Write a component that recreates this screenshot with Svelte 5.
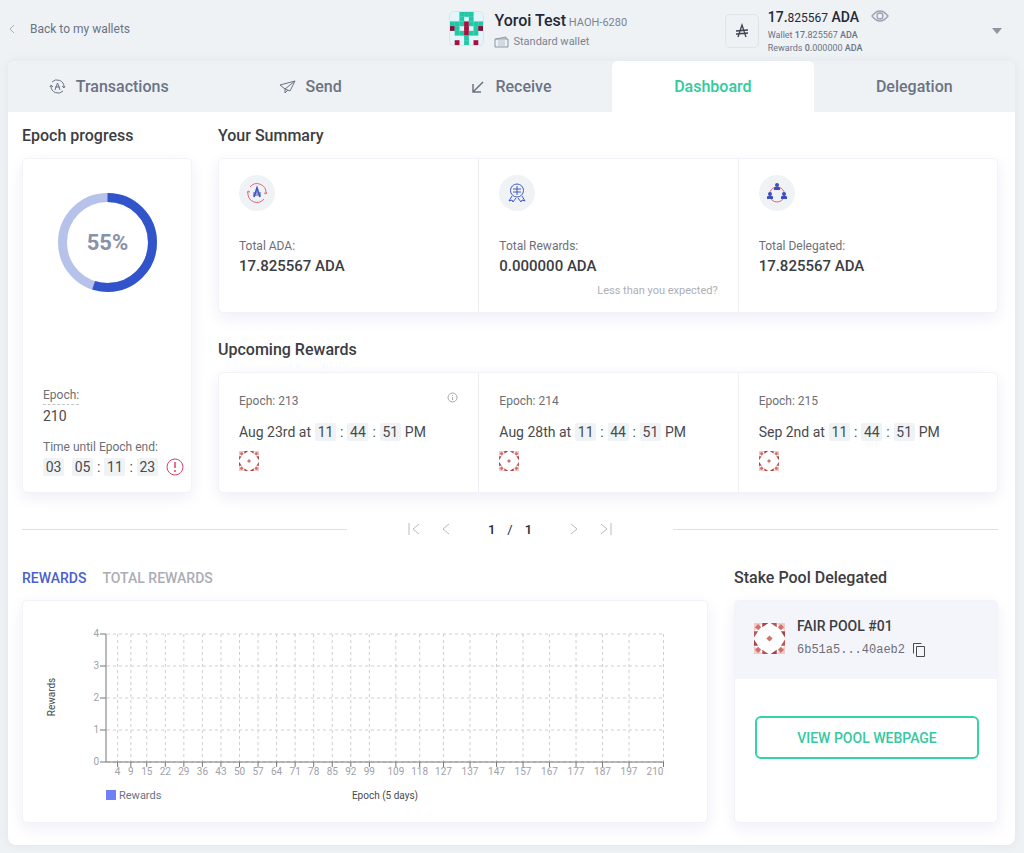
<script lang="ts">
  let activeTab = "Dashboard";
  let activeGraph = "Rewards";
  let hidden = false;

  const tabs = ["Transactions", "Send", "Receive", "Dashboard", "Delegation"];
  const graphs = ["Rewards", "Total rewards"];

  const upcoming = [
    { epoch: 213, date: "Aug 23rd", info: true },
    { epoch: 214, date: "Aug 28th", info: false },
    { epoch: 215, date: "Sep 2nd", info: false },
  ];
  const time = ["11", "44", "51"];

  const epochs = [
    4, 9, 15, 22, 29, 36, 43, 50, 57, 64, 71, 78, 85, 92, 99, 109, 118, 127,
    137, 147, 157, 167, 177, 187, 197, 210,
  ];
  const levels = [0, 1, 2, 3, 4];
  const epochX = (epoch: number) => 84 + epoch * 2.65;
  const levelY = (level: number) => 161 - level * 32;

  // g: green, r: red, d: dark red
  const plate = [
    "..ggg..",
    "..g.g..",
    "gggrggg",
    "dg.r.gd",
    ".ggrgg.",
    "...g...",
    ".r.g.r.",
  ];
  const plateColors: Record<string, string> = {
    g: "#1fc9a4",
    r: "#a80f3c",
    d: "#7d1136",
  };
</script>

{#snippet poolIcon()}
  <svg class="pool-icon" viewBox="0 0 30 30" aria-hidden="true">
    <rect width="30" height="30" rx="3" fill="#fff" />
    {#each [0, 90, 180, 270] as angle}
      <g transform="rotate({angle} 15 15)">
        <path d="M0 0h8l-8 8z" fill="#f3c9c5" />
        <path d="M4 1l3 3-3 3-3-3z" fill="#cf7370" />
        <path d="M8 0h6l-6 4z" fill="#a94346" />
        <path d="M22 0v4l-6-4z" fill="#b95452" />
      </g>
    {/each}
    <path d="M15 12l3 3-3 3-3-3z" fill="#cf7370" />
  </svg>
{/snippet}

{#snippet person(x: number, y: number)}
  <g class="person" transform="translate({x} {y})">
    <circle cx="3" cy="2" r="2" />
    <path d="M0 7V5q0-1 1-1h4q1 0 1 1v2z" />
  </g>
{/snippet}

<header>
  <a class="back" href="#wallets">
    <svg width="8" height="12" viewBox="0 0 8 12"><path d="M6 2L2 6l4 4" /></svg>
    Back to my wallets
  </a>

  <div class="wallet">
    <svg class="plate" viewBox="0 0 35 35" aria-hidden="true">
      <rect x="0.5" y="0.5" width="34" height="34" rx="4" fill="#e3f5fb" stroke="#d5e6ee" />
      {#each plate as row, y}
        {#each row as cell, x}
          {#if cell !== "."}
            <rect x={x * 4.7 + 1} y={y * 4.7 + 1} width="4.8" height="4.8" fill={plateColors[cell]} />
          {/if}
        {/each}
      {/each}
    </svg>
    <div>
      <div class="wallet-name"><strong>Yoroi Test</strong> HAOH-6280</div>
      <div class="wallet-type">
        <svg width="15" height="12" viewBox="0 0 15 12">
          <path d="M1 3h13v8H1zM2 3l10-2v2" /><path d="M4 5h7M4 7h7M4 9h7" opacity="0.5" />
        </svg>
        Standard wallet
      </div>
    </div>
  </div>

  <div class="balance">
    <div class="currency">
      <svg width="14" height="16" viewBox="0 0 14 16">
        <path d="M3 14L7 2l4 12M1 8l12-1M1 11l12-1" stroke-width="1.3" />
      </svg>
    </div>
    <div class="amounts">
      <div class="total">
        {#if hidden}******{:else}<b>17.</b><small>825567</small>{/if} <b>ADA</b>
      </div>
      <div class="part">Wallet <b>17.</b>825567 <b>ADA</b></div>
      <div class="part">Rewards <b>0.</b>000000 <b>ADA</b></div>
    </div>
    <button class="eye" aria-label="Hide balance" on:click={() => (hidden = !hidden)}>
      <svg width="18" height="12" viewBox="0 0 18 12">
        <path d="M1 6q8-10 16 0q-8 10-16 0z" stroke-width="1.3" /><circle cx="9" cy="6" r="3" stroke-width="1.3" />
      </svg>
    </button>
    <button class="caret" aria-label="Switch wallet">
      <svg width="10" height="6" viewBox="0 0 10 6"><path d="M0 0h10L5 6z" /></svg>
    </button>
  </div>
</header>

<main>
  <nav>
    {#each tabs as tab}
      <button class:active={activeTab === tab} on:click={() => (activeTab = tab)}>
        {#if tab === "Transactions"}
          <svg width="17" height="17" viewBox="0 0 17 17">
            <path d="M3 4a7 7 0 0 1 12 5M14 13a7 7 0 0 1-12-5M13 8l2 2 1-2M1 9l1-2 2 2M6 12l2.5-7L11 12M6 9h5" />
          </svg>
        {:else if tab === "Send"}
          <svg width="17" height="14" viewBox="0 0 17 14">
            <path d="M1 5l15-4-5 10-5-2zM16 1L6 9v4l3-3" />
          </svg>
        {:else if tab === "Receive"}
          <svg width="14" height="14" viewBox="0 0 14 14">
            <path d="M12 2L2 12M2 4v8h8" stroke-width="1.5" />
          </svg>
        {/if}
        {tab}
      </button>
    {/each}
  </nav>

  <div class="page">
    <div class="overview">
      <section class="progress">
        <h2>Epoch progress</h2>
        <div class="card epoch-card">
          <svg class="ring" width="99" height="99" viewBox="0 0 99 99">
            <circle cx="49.5" cy="49.5" r="45" stroke="#b6c2ea" />
            <circle
              cx="49.5"
              cy="49.5"
              r="45"
              stroke="#3154cb"
              pathLength="100"
              stroke-dasharray="55 45"
              transform="rotate(-90 49.5 49.5)"
            />
            <text x="49.5" y="57" text-anchor="middle">55%</text>
          </svg>
          <div class="epoch-info">
            <div><span class="label dashed">Epoch:</span></div>
            <div class="number">210</div>
            <div class="label">Time until Epoch end:</div>
            <div class="timer">
              <span class="digits days">03</span>
              <span class="digits">05</span>:
              <span class="digits">11</span>:
              <span class="digits">23</span>
              <svg class="alert" width="18" height="18" viewBox="0 0 18 18">
                <circle cx="9" cy="9" r="8" /><path d="M9 4v6M9 12v2" stroke-width="1.5" />
              </svg>
            </div>
          </div>
        </div>
      </section>

      <div class="right">
        <section>
          <h2>Your Summary</h2>
          <div class="card cells">
            <div class="cell summary">
              <div class="round">
                <svg width="20" height="20" viewBox="0 0 20 20">
                  <path class="pink" d="M3 4a9 9 0 0 1 16 6M17 16A9 9 0 0 1 1 9M17 10l2 1 1-2M0 10l1-2 2 1" />
                  <path class="blue" d="M7 14l3-9 3 9" stroke-width="1.8" />
                  <path class="blue" d="M6 10h8M6 12h8" />
                </svg>
              </div>
              <div class="label">Total ADA:</div>
              <div class="value">17.825567 ADA</div>
            </div>
            <div class="cell summary">
              <div class="round">
                <svg width="20" height="20" viewBox="0 0 20 20">
                  <circle class="blue" cx="10" cy="7.5" r="6.5" />
                  <path class="blue" d="M5 13l-3 5 3-1 1 2 3-4M15 13l3 5-3-1-1 2-3-4" />
                  <path class="blue" d="M10 3v9M6 6h8M6 9h8" />
                </svg>
              </div>
              <div class="label">Total Rewards:</div>
              <div class="value">0.000000 ADA</div>
              <button class="note">Less than you expected?</button>
            </div>
            <div class="cell summary">
              <div class="round">
                <svg width="20" height="20" viewBox="0 0 20 20">
                  <circle class="pink" cx="10" cy="11.5" r="7.5" />
                  {@render person(7, 0)}
                  {@render person(0, 9)}
                  {@render person(14, 9)}
                </svg>
              </div>
              <div class="label">Total Delegated:</div>
              <div class="value">17.825567 ADA</div>
            </div>
          </div>
        </section>

        <section>
          <h2>Upcoming Rewards</h2>
          <div class="card cells">
            {#each upcoming as reward}
              <div class="cell reward">
                <div class="label reward-head">
                  Epoch: {reward.epoch}
                  {#if reward.info}
                    <svg width="11" height="11" viewBox="0 0 11 11">
                      <circle cx="5.5" cy="5.5" r="4.5" /><path d="M5.5 5v3M5.5 3v1" />
                    </svg>
                  {/if}
                </div>
                <div class="date">
                  {reward.date} at
                  {#each time as part, i}
                    {#if i > 0}<span>:</span>{/if}
                    <span class="digits">{part}</span>
                  {/each}
                  PM
                </div>
                {@render poolIcon()}
              </div>
            {/each}
          </div>
        </section>
      </div>
    </div>

    <div class="pagination">
      <hr />
      <div class="pager">
        <button aria-label="First page">
          <svg width="12" height="14" viewBox="0 0 12 14"><path d="M1 1v12M11 2L5 7l6 5" /></svg>
        </button>
        <button aria-label="Previous page">
          <svg width="8" height="14" viewBox="0 0 8 14"><path d="M7 2L1 7l6 5" /></svg>
        </button>
        <div class="pages"><b>1</b><span>/</span><b>1</b></div>
        <button aria-label="Next page">
          <svg width="8" height="14" viewBox="0 0 8 14"><path d="M1 2l6 5-6 5" /></svg>
        </button>
        <button aria-label="Last page">
          <svg width="12" height="14" viewBox="0 0 12 14"><path d="M11 1v12M1 2l6 5-6 5" /></svg>
        </button>
      </div>
      <hr />
    </div>

    <div class="details">
      <section>
        <div class="graph-tabs">
          {#each graphs as graph}
            <button class:active={activeGraph === graph} on:click={() => (activeGraph = graph)}>
              {graph}
            </button>
          {/each}
        </div>
        <div class="card">
          <svg class="chart" viewBox="0 0 684 221">
            <g class="grid">
              {#each levels as level}
                <path d="M84 {levelY(level)}H641" />
              {/each}
              {#each epochs as epoch}
                <path d="M{epochX(epoch)} 33V161" />
              {/each}
            </g>
            <g class="axis">
              <path d="M83 33V161H641" />
              {#each levels as level}
                <path d="M77 {levelY(level)}h6" />
              {/each}
              {#each epochs as epoch}
                <path d="M{epochX(epoch)} 161v5" />
              {/each}
            </g>
            <g class="ticks">
              {#each levels as level}
                <text x="76" y={levelY(level) + 3} text-anchor="end">{level}</text>
              {/each}
              {#each epochs as epoch}
                <text x={epoch === 210 ? 632 : epochX(epoch)} y="174" text-anchor="middle">{epoch}</text>
              {/each}
            </g>
            <text class="axis-name" text-anchor="middle" transform="translate(32 96) rotate(-90)">Rewards</text>
            <rect x="83" y="189" width="10" height="10" fill="#6f80f8" />
            <text class="legend" x="96" y="198">Rewards</text>
            <text class="axis-name" x="362" y="198" text-anchor="middle">Epoch (5 days)</text>
          </svg>
        </div>
      </section>

      <section class="pool">
        <h2>Stake Pool Delegated</h2>
        <div class="card pool-card">
          <div class="pool-head">
            {@render poolIcon()}
            <div>
              <div class="pool-name">FAIR POOL #01</div>
              <div class="hash">
                6b51a5...40aeb2
                <button aria-label="Copy pool id">
                  <svg width="12" height="14" viewBox="0 0 12 14">
                    <path d="M0.5 10.5v-10h8M3.5 3.5h8v10h-8z" />
                  </svg>
                </button>
              </div>
            </div>
          </div>
          <div class="pool-body">
            <button class="webpage">VIEW POOL WEBPAGE</button>
          </div>
        </div>
      </section>
    </div>
  </div>
</main>

<style>
  :global(body) {
    background-color: #eef2f5;
    font-family: Roboto, "Liberation Sans", sans-serif;
    font-size: 12px;
    color: #4a4a4d;
  }

  button {
    display: flex;
    align-items: center;
    padding: 0;
    border: none;
    background: none;
    font: inherit;
    color: inherit;
    cursor: pointer;
  }

  svg {
    flex-shrink: 0;
    fill: none;
    stroke-width: 1;
  }

  b,
  strong {
    font-weight: 500;
  }

  h2 {
    margin: 0 0 12px;
    font-size: 16px;
    line-height: 20px;
    font-weight: 500;
    color: #3c3d42;
  }

  header {
    display: grid;
    grid-template-columns: 441fr 275fr 277fr;
    align-items: center;
    height: 61px;
    padding: 0 22px 0 8px;
    box-sizing: border-box;
  }

  .back {
    display: flex;
    align-items: center;
    gap: 14px;
    margin-bottom: 4px;
    color: #6b7384;
    text-decoration: none;
  }

  .back svg {
    stroke: #a5abb8;
  }

  .wallet {
    display: flex;
    gap: 10px;
  }

  .plate {
    width: 35px;
    height: 35px;
  }

  .wallet-name {
    line-height: 20px;
    font-size: 11px;
    color: #7b8392;
  }

  .wallet-name strong {
    font-size: 16px;
    color: #242838;
  }

  .wallet-type {
    display: flex;
    align-items: center;
    gap: 4px;
    line-height: 18px;
    font-size: 11px;
    color: #7b8392;
  }

  .wallet-type svg {
    stroke: #8d95a4;
  }

  .balance {
    display: flex;
    align-items: center;
  }

  .currency {
    display: grid;
    place-items: center;
    width: 32px;
    height: 32px;
    margin-right: 9px;
    border: 1px solid #e0e4ea;
    border-radius: 5px;
  }

  .currency svg {
    stroke: #3d4250;
  }

  .total {
    line-height: 22px;
    font-size: 14px;
    color: #242838;
  }

  .total small {
    font-size: 12px;
  }

  .part {
    line-height: 13px;
    font-size: 9px;
    color: #6b7384;
  }

  .eye {
    align-self: flex-start;
    margin: 4px 0 0 8px;
  }

  .eye svg {
    stroke: #9ba1ae;
  }

  .caret {
    margin-left: auto;
  }

  .caret svg {
    fill: #8f95a1;
  }

  main {
    margin: 0 9px 8px 8px;
    border-radius: 8px;
    background-color: #fff;
    box-shadow: 0 0 10px #dfe4ea;
    overflow: hidden;
  }

  nav {
    display: grid;
    grid-template-columns: repeat(5, 1fr);
    background-color: #eef2f5;
  }

  nav button {
    justify-content: center;
    gap: 10px;
    height: 51px;
    font-size: 16px;
    font-weight: 500;
    color: #6b7384;
  }

  nav button.active {
    border-radius: 6px 6px 0 0;
    background-color: #fff;
    color: #2fcb9c;
  }

  nav svg {
    stroke: #6b7384;
  }

  .page {
    padding: 14px 17px 22px 14px;
  }

  .overview {
    display: grid;
    grid-template-columns: 170fr 780fr;
    gap: 26px;
  }

  .progress {
    display: flex;
    flex-direction: column;
  }

  .right {
    display: grid;
    gap: 27px;
  }

  .card {
    border: 1px solid #f2f3f8;
    border-radius: 5px;
    background-color: #fff;
    box-shadow: 0 5px 16px #eeeef8;
  }

  .epoch-card {
    flex: 1;
    display: flex;
    flex-direction: column;
    justify-content: space-between;
    padding: 34px 0 16px;
  }

  .ring {
    align-self: center;
    stroke-width: 9;
  }

  .ring text {
    font-size: 22px;
    font-weight: 700;
    fill: #8a92a9;
  }

  .epoch-info {
    padding-left: 20px;
  }

  .label {
    line-height: 18px;
    color: #6d6f76;
  }

  .dashed {
    border-bottom: 1px dashed #c4c8cc;
    padding-bottom: 2px;
  }

  .number {
    margin: 2px 0 12px;
    line-height: 20px;
    font-size: 14px;
  }

  .timer,
  .date {
    display: flex;
    align-items: center;
    line-height: 18px;
    font-size: 14px;
  }

  .timer {
    gap: 4px;
    margin-top: 2px;
  }

  .digits {
    width: 21px;
    border-radius: 2px;
    background-color: #f0f3f5;
    text-align: center;
  }

  .days {
    margin-right: 4px;
  }

  .alert {
    margin-left: 4px;
    stroke: #e0406a;
  }

  .cells {
    display: grid;
    grid-template-columns: repeat(3, 1fr);
  }

  .cell + .cell {
    border-left: 1px solid #eeeff4;
  }

  .summary {
    padding: 16px 20px 13px;
  }

  .round {
    display: grid;
    place-items: center;
    width: 36px;
    height: 36px;
    margin-bottom: 26px;
    border-radius: 50%;
    background-color: #f0f3f5;
  }

  .pink {
    stroke: #e5647c;
  }

  .blue {
    stroke: #4458c4;
  }

  .person {
    fill: #3a50c2;
  }

  .value {
    line-height: 22px;
    font-size: 15px;
    font-weight: 500;
    color: #3c3d42;
  }

  .note {
    margin: 6px 0 0 auto;
    line-height: 16px;
    font-size: 11px;
    color: #adafb6;
  }

  .reward {
    padding: 19px 20px 21px;
  }

  .reward-head {
    display: flex;
    justify-content: space-between;
    margin-bottom: 13px;
  }

  .reward-head svg {
    stroke: #a5a7ad;
  }

  .date {
    gap: 4px;
    margin-bottom: 10px;
  }

  .pool-icon {
    display: block;
    width: 20px;
    height: 20px;
  }

  .pagination {
    display: grid;
    grid-template-columns: 1fr 1fr 1fr;
    align-items: center;
    margin: 24px 0 27px;
  }

  hr {
    width: 100%;
    margin: 0;
    border: none;
    border-top: 1px solid #dfe0e5;
  }

  .pager {
    display: flex;
    align-items: center;
    justify-content: center;
    gap: 22px;
    height: 24px;
  }

  .pager svg {
    stroke: #b9bbc2;
  }

  .pages {
    display: flex;
    gap: 12px;
    margin: 0 16px;
    font-size: 13px;
    color: #242838;
  }

  .details {
    display: grid;
    grid-template-columns: 686fr 264fr;
    gap: 26px;
  }

  .graph-tabs {
    display: flex;
    gap: 16px;
    margin-bottom: 12px;
  }

  .graph-tabs button {
    line-height: 20px;
    font-size: 14px;
    font-weight: 500;
    text-transform: uppercase;
    color: #abadb4;
  }

  .graph-tabs button.active {
    color: #4a5fce;
  }

  .chart {
    display: block;
    width: 100%;
  }

  .grid {
    stroke: #cfcfd2;
    stroke-dasharray: 3 3;
  }

  .axis {
    stroke: #777;
  }

  .chart .ticks text {
    font-size: 10px;
    fill: #a0a1a6;
  }

  .chart .axis-name {
    font-size: 10px;
    fill: #4a4a4d;
  }

  .legend {
    font-size: 11px;
    fill: #6b7384;
  }

  .pool {
    display: flex;
    flex-direction: column;
  }

  .pool-card {
    flex: 1;
  }

  .pool-head {
    display: flex;
    align-items: center;
    gap: 12px;
    padding: 16px 19px 20px;
    background-color: #f4f5fb;
  }

  .pool-head .pool-icon {
    width: 31px;
    height: 31px;
  }

  .pool-name {
    margin-bottom: 6px;
    line-height: 18px;
    font-size: 14px;
    font-weight: 500;
    color: #3c3d42;
  }

  .hash {
    display: flex;
    align-items: center;
    gap: 8px;
    line-height: 18px;
    font-family: "Liberation Mono", monospace;
    font-size: 12px;
    color: #6d6f76;
  }

  .hash svg {
    stroke: #4a4a4d;
  }

  .pool-body {
    padding: 37px 18px 20px 20px;
  }

  .webpage {
    justify-content: center;
    width: 100%;
    height: 43px;
    border: 2px solid #35d3a8;
    border-radius: 6px;
    font-size: 14px;
    font-weight: 500;
    color: #35c9a0;
  }
</style>
